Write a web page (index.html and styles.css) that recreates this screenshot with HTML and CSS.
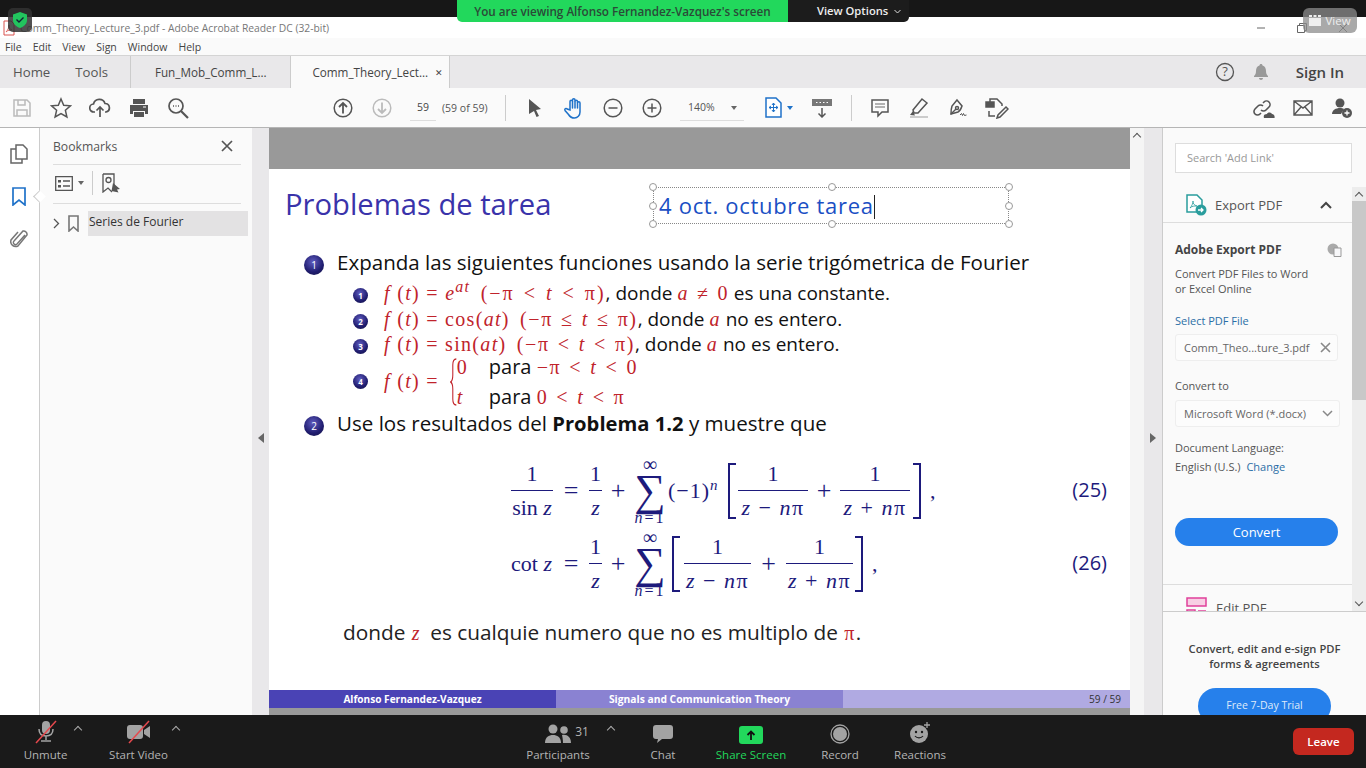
FILE: index.html
```html
<!DOCTYPE html>
<html lang="en">
<head>
    <meta charset="UTF-8">
    <title>Comm_Theory_Lecture_3.pdf - Adobe Acrobat Reader DC (32-bit)</title>
    <link rel="stylesheet" href="styles.css">
</head>
<body>
<div class="screen">
    <div class="topbar"></div>

    <div class="titlebar">
        <svg class="pdficon" width="12" height="16" viewBox="0 0 12 16"><path d="M1 1h7l3 3v11H1z" fill="#fff" stroke="#d9534f"/><path d="M3 12c2-2 3-5 3-7 0 3 1 4 3 5-2 0-4 0-6 2z" fill="none" stroke="#d9534f" stroke-width=".8"/></svg>
        <span class="apptitle">Comm_Theory_Lecture_3.pdf - Adobe Acrobat Reader DC (32-bit)</span>
        <div class="winctrls">
            <svg width="10" height="10" viewBox="0 0 10 10"><path d="M1 5h8" stroke="#666"/></svg>
            <svg width="10" height="10" viewBox="0 0 10 10"><path d="M.5 2.5h7v7h-7zM2.5 2.5v-2h7v7h-2" fill="none" stroke="#666"/></svg>
            <svg width="10" height="10" viewBox="0 0 10 10"><path d="M1 1l8 8M9 1l-8 8" stroke="#666"/></svg>
        </div>
    </div>

    <div class="menubar">
        <span>File</span><span>Edit</span><span>View</span><span>Sign</span><span>Window</span><span>Help</span>
    </div>

    <div class="tabbar">
        <span class="hometab">Home</span>
        <span class="hometab toolstab">Tools</span>
        <div class="doctab">Fun_Mob_Comm_L...</div>
        <div class="doctab active">Comm_Theory_Lect...<span class="tabclose">&#10005;</span></div>
        <div class="tabright">
            <svg width="20" height="20" viewBox="0 0 20 20"><circle cx="10" cy="10" r="8.5" fill="none" stroke="#555" stroke-width="1.3"/><text x="10" y="14" text-anchor="middle" class="helpmark">?</text></svg>
            <svg class="bell" width="16" height="18" viewBox="0 0 16 18"><path d="M8 1c1 0 1.500.7 1.500 1.500C12 3.300 13 5.500 13 8c0 3 1 4 2 5v1H1v-1c1-1 2-2 2-5 0-2.500 1-4.700 3.500-5.500C6.500 1.700 7 1 8 1zM6 15h4c0 1-1 2-2 2s-2-1-2-2z" fill="#999"/></svg>
            <span class="signin">Sign In</span>
        </div>
    </div>

    <div class="toolbar">
        <div class="tool"><svg width="20" height="20" viewBox="0 0 20 20" fill="none" stroke="#bbb" stroke-width="1.5"><path d="M2 2h13l3 3v13H2z"/><path d="M6 2v5h7V2M5 18v-6h10v6"/></svg></div>
        <div class="tool"><svg width="22" height="22" viewBox="0 0 22 22" fill="none" stroke="#555" stroke-width="1.500"><path d="M11 2l2.700 6.200 6.800.6-5.100 4.500 1.500 6.700L11 16.500 5.100 20l1.500-6.700L1.500 8.800l6.800-.6z"/></svg></div>
        <div class="tool"><svg width="22" height="22" viewBox="0 0 22 22" fill="none" stroke="#555" stroke-width="1.700"><path d="M6 15H5a4 4 0 0 1-.5-8A6 6 0 0 1 16 6.500a4.300 4.300 0 0 1 1 8.500h-1"/><path d="M11 20V10M7.500 13.500L11 10l3.500 3.500"/></svg></div>
        <div class="tool"><svg width="20" height="20" viewBox="0 0 20 20"><path d="M4 1h12v5H4zM1 7h18v9h-3v-3H4v3H1zM5 14h10v5H5z" fill="#555"/><path d="M14 9h3" stroke="#fff"/></svg></div>
        <div class="tool"><svg width="22" height="22" viewBox="0 0 22 22" fill="none" stroke="#555" stroke-width="1.700"><circle cx="9" cy="9" r="7"/><path d="M14 14l7 7" stroke-width="2.200"/><path d="M6 9h1M8.500 9h1M11 9h1" stroke-width="1.400"/></svg></div>

        <div class="tool navstart"><svg width="20" height="20" viewBox="0 0 20 20" fill="none" stroke="#555" stroke-width="1.500"><circle cx="10" cy="10" r="8.800"/><path d="M10 15.500V5M6 9l4-4 4 4" stroke-width="1.800"/></svg></div>
        <div class="tool"><svg width="20" height="20" viewBox="0 0 20 20" fill="none" stroke="#bbb" stroke-width="1.500"><circle cx="10" cy="10" r="8.800"/><path d="M10 4.500V15M6 11l4 4 4-4" stroke-width="1.800"/></svg></div>
        <div class="pagebox">59</div>
        <span class="pagecount">(59 of 59)</span>
        <div class="toolsep"></div>

        <div class="tool"><svg width="14" height="20" viewBox="0 0 14 20"><path d="M1 1l12 10-5 1 3 6-2.500 1-2.500-6L1 16z" fill="#555"/></svg></div>
        <div class="tool"><svg width="22" height="22" viewBox="0 0 22 22" fill="none" stroke="#1f72c9" stroke-width="1.500" stroke-linecap="round"><path d="M7 13V4.500a1.200 1.200 0 0 1 2.500 0V3a1.200 1.200 0 0 1 2.500 0v1.500a1.200 1.200 0 0 1 2.500 0V6a1.200 1.200 0 0 1 2.500 0v9c0 3.500-2.500 6-5.500 6s-4.500-1-6-3.500L2 13.500c-.8-1.500 1-2.800 2.200-1.500z"/><path d="M9.500 4.500V11M12 4.500V11M14.500 6v5"/></svg></div>
        <div class="tool"><svg width="20" height="20" viewBox="0 0 20 20" fill="none" stroke="#555" stroke-width="1.500"><circle cx="10" cy="10" r="8.800"/><path d="M5.500 10h9"/></svg></div>
        <div class="tool"><svg width="20" height="20" viewBox="0 0 20 20" fill="none" stroke="#555" stroke-width="1.500"><circle cx="10" cy="10" r="8.800"/><path d="M5.500 10h9M10 5.500v9"/></svg></div>
        <div class="zoomsel">140%<span class="caret"></span></div>
        <div class="fitpage">
            <svg width="17" height="21" viewBox="0 0 17 21"><path d="M1 1h10l5 5v14H1z" fill="#fff" stroke="#1f72c9" stroke-width="1.500"/><path d="M8.500 6v9M4 10.500h9M7 8l1.500-2L10 8M7 13l1.500 2 1.500-2M6 9l-2 1.500L6 12M11 9l2 1.500-2 1.500" fill="none" stroke="#1f72c9"/></svg>
            <span class="caret blue"></span>
        </div>
        <div class="tool"><svg width="22" height="20" viewBox="0 0 22 20"><path d="M1 1h20v7H1z" fill="#777"/><path d="M5 4.500h1.500M8.500 4.500H10M12 4.500h1.500M15.500 4.500H17" stroke="#fff"/><path d="M11 10v9M7.500 15.500L11 19l3.500-3.500" fill="none" stroke="#555" stroke-width="1.500"/></svg></div>
        <div class="toolsep narrow"></div>
        <div class="tool"><svg width="20" height="20" viewBox="0 0 20 20" fill="none" stroke="#555" stroke-width="1.500"><path d="M2 2h16v12h-6l-4 4v-4H2z"/><path d="M5 6h10M5 9h10" stroke="#999"/></svg></div>
        <div class="tool"><svg width="22" height="22" viewBox="0 0 22 22"><path d="M14 2l5 4-9 10H6l-1-3z" fill="none" stroke="#555" stroke-width="1.500"/><path d="M5 14l-3 4 5 .5z" fill="#555"/><path d="M2 20h18" stroke="#ccc" stroke-width="2"/></svg></div>
        <div class="tool"><svg width="22" height="22" viewBox="0 0 22 22" fill="none" stroke="#555" stroke-width="1.500"><path d="M10 3l5 6c-1 3-2 5-4 6l-7 2c0-3 0-5 1-8z"/><path d="M4 17l5-5"/><circle cx="10" cy="11" r="1.500"/><path d="M13 18l1.500-1.500 1 2 1-2 1 2 2-.5" stroke-width="1"/></svg></div>
        <div class="tool"><svg width="24" height="22" viewBox="0 0 24 22" fill="none" stroke="#555" stroke-width="1.500"><path d="M5 5V2h7l5 5v2M4 14v5h6"/><path d="M1 5h8v5H1z" fill="#555"/><path d="M21 10l2 2-8 8-3 1 1-3z"/></svg></div>

        <div class="toolright">
            <div class="tool"><svg width="24" height="22" viewBox="0 0 24 22" fill="none" stroke="#555" stroke-width="1.600"><path d="M9 13a3.500 3.500 0 0 0 5 0l3-3a3.500 3.500 0 0 0-5-5l-1 1"/><path d="M11 9a3.500 3.500 0 0 0-5 0l-3 3a3.500 3.500 0 0 0 5 5l1-1"/><path d="M12 21c-1-3 1-4 3-4 .5-2 4-2 5 0 2 0 3 2 2.500 4z" fill="#555" stroke="none"/></svg></div>
            <div class="tool"><svg width="20" height="16" viewBox="0 0 20 16" fill="none" stroke="#555" stroke-width="1.400"><path d="M1 1h18v14H1zM1 1l9 7 9-7M1 15l7-8M19 15l-7-8"/></svg></div>
            <div class="tool"><svg width="22" height="22" viewBox="0 0 22 22"><circle cx="9" cy="6" r="4.500" fill="#555"/><path d="M1 17c0-4 4-6 8-6 1.500 0 3 .3 4 1l-3 5z" fill="#555"/><circle cx="16" cy="16" r="5" fill="#555"/><path d="M16 13.500v5M13.500 16h5" stroke="#fff" stroke-width="1.300"/></svg></div>
        </div>
    </div>

    <div class="workspace">
        <div class="rail">
            <svg width="18" height="20" viewBox="0 0 18 20" fill="none" stroke="#666" stroke-width="1.500"><path d="M6 1h7l4 4v10H6z"/><path d="M6 5H1v14h11v-4"/></svg>
            <svg width="14" height="19" viewBox="0 0 14 19" fill="none" stroke="#1f72c9" stroke-width="1.700"><path d="M1 1h12v17l-6-5-6 5z"/></svg>
            <svg width="18" height="20" viewBox="0 0 18 20" fill="none" stroke="#777" stroke-width="1.500"><path d="M15 6l-8 9a2 2 0 0 1-3-3l9-10a3.500 3.500 0 0 1 4 4l-9 11a5 5 0 0 1-7-6l7-8"/></svg>
            <span class="railnotch"></span>
        </div>

        <div class="bookmarks">
            <div class="bmhead"><span>Bookmarks</span>
                <svg width="12" height="12" viewBox="0 0 12 12"><path d="M1 1l10 10M11 1L1 11" stroke="#555" stroke-width="1.700"/></svg>
            </div>
            <div class="bmtools">
                <svg width="18" height="15" viewBox="0 0 18 15" fill="none" stroke="#555" stroke-width="1.300"><path d="M.7.7h16.600v13.600H.7z"/><path d="M3 4h3v2.500H3zM3 9h3v2.500H3z" fill="#555" stroke="none"/><path d="M8 5h7M8 10h7"/></svg>
                <span class="caret small"></span>
                <span class="bmsep"></span>
                <svg width="19" height="20" viewBox="0 0 19 20" fill="none" stroke="#555" stroke-width="1.300"><path d="M1 1h11v12M1 1v18l5-4 4 4"/><circle cx="6.500" cy="7" r="2.500"/><path d="M11 10l7 6-3 .5 1.500 3-7-1.500z" fill="#555" stroke="none"/></svg>
            </div>
            <div class="bmrow">
                <svg width="7" height="11" viewBox="0 0 7 11"><path d="M1 1l4.500 4.500L1 10" fill="none" stroke="#555" stroke-width="1.300"/></svg>
                <svg class="bmflag" width="11" height="17" viewBox="0 0 11 17"><path d="M1 1h9v15l-4.500-4L1 16z" fill="none" stroke="#777" stroke-width="1.600"/></svg>
                <span class="bmlabel">Series de Fourier</span>
            </div>
        </div>

        <div class="gutter"><span class="arrow left"></span></div>

        <div class="slide">
            <div class="slidetop"></div>
            <div class="slidebody">
                <div class="titlerow">
                    <h1>Problemas de tarea</h1>
                    <div class="textbox">
                        <i class="hd tl"></i><i class="hd ml"></i><i class="hd bl"></i>
                        <i class="hd tc"></i><i class="hd bc"></i>
                        <i class="hd tr"></i><i class="hd mr"></i><i class="hd br"></i>
                        4 oct. octubre tarea<span class="cursor"></span>
                    </div>
                </div>

                <div class="mainitem first"><span class="ball">1</span>Expanda las siguientes funciones usando la serie trigómetrica de Fourier</div>
                <div class="subitem first"><span class="ball mini">1</span><span class="m"><i>f</i> (<i>t</i>) = <i>e</i><sup><i>at</i></sup> <span class="rng">(−π &lt; <i>t</i> &lt; π)</span></span>, donde <span class="m neq"><i>a</i> ≠ 0</span> es una constante.</div>
                <div class="subitem"><span class="ball mini">2</span><span class="m"><i>f</i> (<i>t</i>) = cos(<i>at</i>) <span class="rng tight">(−π ≤ <i>t</i> ≤ π)</span></span>, donde <span class="m"><i>a</i></span> no es entero.</div>
                <div class="subitem"><span class="ball mini">3</span><span class="m"><i>f</i> (<i>t</i>) = sin(<i>at</i>) <span class="rng tight">(−π &lt; <i>t</i> &lt; π)</span></span>, donde <span class="m"><i>a</i></span> no es entero.</div>
                <div class="subitem piece">
                    <span class="ball mini">4</span><span class="m"><i>f</i> (<i>t</i>) =</span>
                    <svg class="brace" width="7" height="48" viewBox="0 0 10 48" preserveAspectRatio="none"><path d="M9 1C5 1 4 3 4 7v10c0 4-1 6-3 7 2 1 3 3 3 7v10c0 4 1 6 5 6" fill="none" stroke="#c0232b" stroke-width="1.500"/></svg>
                    <div class="cases">
                        <div><span class="m case1">0</span>para <span class="m rng tight">−π &lt; <i>t</i> &lt; 0</span></div>
                        <div><span class="m case1"><i>t</i></span>para <span class="m rng tight">0 &lt; <i>t</i> &lt; π</span></div>
                    </div>
                </div>
                <div class="mainitem second"><span class="ball">2</span>Use los resultados del <b>Problema 1.2</b> y muestre que</div>

                <div class="eq eq1">
                    <span class="frac w42"><span>1</span><span>sin <i>z</i></span></span>
                    <span class="op">=</span>
                    <span class="frac w13"><span>1</span><span><i>z</i></span></span>
                    <span class="op">+</span>
                    <span class="sum"><span class="lim">∞</span><span class="sigma">∑</span><span class="lim"><i>n</i>=1</span></span>
                    <span class="pow">(−1)<sup><i>n</i></sup></span>
                    <span class="brk">
                        <span class="frac w70"><span>1</span><span><i>z</i> − <i>n</i>π</span></span>
                        <span class="op">+</span>
                        <span class="frac w70"><span>1</span><span><i>z</i> + <i>n</i>π</span></span>
                    </span>
                    <span class="comma">,</span>
                    <span class="eqnum">(25)</span>
                </div>
                <div class="eq eq2">
                    <span class="cot">cot <i>z</i></span>
                    <span class="op">=</span>
                    <span class="frac w13"><span>1</span><span><i>z</i></span></span>
                    <span class="op">+</span>
                    <span class="sum"><span class="lim">∞</span><span class="sigma">∑</span><span class="lim"><i>n</i>=1</span></span>
                    <span class="brk nopow">
                        <span class="frac w70"><span>1</span><span><i>z</i> − <i>n</i>π</span></span>
                        <span class="op">+</span>
                        <span class="frac w70"><span>1</span><span><i>z</i> + <i>n</i>π</span></span>
                    </span>
                    <span class="comma">,</span>
                    <span class="eqnum">(26)</span>
                </div>
                <div class="closing">donde <span class="m zvar"><i>z</i></span> es cualquie numero que no es multiplo de <span class="m pivar">π</span>.</div>
            </div>
            <div class="slidefoot">
                <span class="seg one">Alfonso Fernandez-Vazquez</span>
                <span class="seg two">Signals and Communication Theory</span>
                <span class="seg three">59 / 59</span>
            </div>
            <div class="slidebottom"></div>
        </div>

        <div class="docscroll"><span class="arrow up"></span></div>
        <div class="gutter right"><span class="arrow rightward"></span></div>

        <div class="panel">
            <div class="searchwrap"><div class="search">Search 'Add Link'</div></div>
            <div class="panelscroll">
                <div class="panelcontent">
                    <div class="exporthead">
                        <svg width="21" height="22" viewBox="0 0 21 22"><path d="M1 1h10l5 5v12H1z" fill="#fff" stroke="#2a9d9d" stroke-width="1.500"/><path d="M4 14c2-2 3-5 3-7 0 3 1 4 4 5-3 0-5 0-7 2z" fill="none" stroke="#2a9d9d" stroke-width=".8"/><circle cx="15" cy="16" r="5.500" fill="#2a9d9d"/><path d="M12 16h5M15 14l2 2-2 2" fill="none" stroke="#fff" stroke-width="1.300"/></svg>
                        <span>Export PDF</span>
                        <svg class="chev" width="12" height="8" viewBox="0 0 12 8"><path d="M1 7l5-5 5 5" fill="none" stroke="#444" stroke-width="2"/></svg>
                    </div>
                    <div class="exportbody">
                        <div class="exporttitle"><b>Adobe Export PDF</b>
                            <svg width="15" height="14" viewBox="0 0 15 14"><circle cx="6" cy="6" r="5.500" fill="#aaa"/><path d="M7 5h7v8.500H7z" fill="#f7f7f9" stroke="#999"/></svg>
                        </div>
                        <p class="desc">Convert PDF Files to Word<br>or Excel Online</p>
                        <div class="bluelink selectfile">Select PDF File</div>
                        <div class="field filefield"><span>Comm_Theo...ture_3.pdf</span>
                            <svg width="11" height="11" viewBox="0 0 11 11"><path d="M1 1l9 9M10 1l-9 9" stroke="#888" stroke-width="1.600"/></svg>
                        </div>
                        <div class="convertlabel">Convert to</div>
                        <div class="field wordfield"><span>Microsoft Word (*.docx)</span>
                            <svg width="11" height="7" viewBox="0 0 11 7"><path d="M1 1l4.500 4.500L10 1" fill="none" stroke="#888" stroke-width="1.500"/></svg>
                        </div>
                        <div class="langlabel">Document Language:</div>
                        <div class="langvalue">English (U.S.) <span class="bluelink">Change</span></div>
                        <div class="convertbtn">Convert</div>
                    </div>
                    <div class="editpdf">
                        <svg width="21" height="22" viewBox="0 0 21 22" fill="none" stroke="#e0409a" stroke-width="1.500"><path d="M1 1h19v8H1z" fill="#f8cfe4"/><path d="M1 13h8v8H1zM12 14h8M12 18h8"/></svg>
                        <span>Edit PDF</span>
                    </div>
                </div>
                <div class="panelbar">
                    <span class="arrow up dark"></span>
                    <span class="thumb"></span>
                    <span class="arrow down dark"></span>
                </div>
            </div>
            <div class="promo">
                <p>Convert, edit and e-sign PDF<br>forms &amp; agreements</p>
                <div class="trialbtn">Free 7-Day Trial</div>
            </div>
        </div>
    </div>

    <div class="zoombar">
        <div class="zitem unmute">
            <svg width="26" height="24" viewBox="0 0 26 24"><rect x="9" y="1" width="8" height="13" rx="4" fill="#a3a3a3"/><path d="M6 9c0 5 3 7 7 7s7-2 7-7M13 16v4M8 21h10" fill="none" stroke="#a3a3a3" stroke-width="1.500"/><path d="M3 23L23 1" stroke="#e5484d" stroke-width="1.500"/></svg>
            <span>Unmute</span>
        </div>
        <span class="zchev"></span>
        <div class="zitem video">
            <svg width="26" height="24" viewBox="0 0 26 24"><rect x="1" y="5" width="16" height="14" rx="3" fill="#a3a3a3"/><path d="M18 10l6-4v12l-6-4z" fill="#a3a3a3"/><path d="M3 23L23 1" stroke="#e5484d" stroke-width="1.500"/></svg>
            <span>Start Video</span>
        </div>
        <span class="zchev"></span>
        <div class="zitem people">
            <div class="peopleicon">
                <svg width="26" height="20" viewBox="0 0 26 20" fill="#a3a3a3"><circle cx="8" cy="5" r="4.500"/><path d="M0 19c0-6 4-8 8-8s8 2 8 8z"/><circle cx="19" cy="6" r="3.800"/><path d="M17 11c5-1 9 2 9 8h-8c0-3-.5-6-1-8z"/></svg>
                <span class="pcount">31</span>
            </div>
            <span>Participants</span>
        </div>
        <span class="zchev"></span>
        <div class="zitem chat">
            <svg width="22" height="20" viewBox="0 0 22 20"><path d="M4 1h14a3 3 0 0 1 3 3v8a3 3 0 0 1-3 3h-8l-5 4 1-4H4a3 3 0 0 1-3-3V4a3 3 0 0 1 3-3z" fill="#a3a3a3"/></svg>
            <span>Chat</span>
        </div>
        <div class="zitem share">
            <svg width="24" height="18" viewBox="0 0 24 18"><rect width="24" height="18" rx="3" fill="#22d85c"/><path d="M12 14V6M8.500 9L12 5.500 15.500 9" fill="none" stroke="#111" stroke-width="1.800"/></svg>
            <span>Share Screen</span>
        </div>
        <div class="zitem record">
            <svg width="20" height="20" viewBox="0 0 20 20"><circle cx="10" cy="10" r="9" fill="none" stroke="#a3a3a3" stroke-width="1.300"/><circle cx="10" cy="10" r="7" fill="#a3a3a3"/></svg>
            <span>Record</span>
        </div>
        <div class="zitem reactions">
            <svg width="22" height="22" viewBox="0 0 22 22"><circle cx="10" cy="12" r="9" fill="#a3a3a3"/><circle cx="7" cy="10" r="1.200" fill="#1a1a1a"/><circle cx="13" cy="10" r="1.200" fill="#1a1a1a"/><path d="M6 14c2 2.500 6 2.500 8 0" fill="none" stroke="#1a1a1a" stroke-width="1.200"/><path d="M18 0v6M15 3h6" stroke="#a3a3a3" stroke-width="1.300"/></svg>
            <span>Reactions</span>
        </div>
        <div class="leavebtn">Leave</div>
    </div>

    <!-- zoom controls floating over the shared screen -->
    <div class="banner">
        <div class="bannergreen">You are viewing Alfonso Fernandez-Vazquez's screen</div>
        <div class="bannerdark">View Options
            <svg width="7" height="5" viewBox="0 0 7 5"><path d="M.5 1l3 3 3-3" fill="none" stroke="#ddd"/></svg>
        </div>
    </div>
    <div class="shield">
        <svg width="14" height="16" viewBox="0 0 14 16"><path d="M7 0l7 2.500V8c0 4-3 6.500-7 8-4-1.500-7-4-7-8V2.500z" fill="#22c55e"/><path d="M3.500 7.500l2.500 2.500 4.500-4.500" fill="none" stroke="#123" stroke-width="1.400"/></svg>
    </div>
    <div class="viewbtn">
        <svg width="12" height="11" viewBox="0 0 12 11" fill="#eee"><path d="M0 3h12v8H0zM0 0h3v2H0zM4.500 0h3v2h-3zM9 0h3v2H9z"/></svg>
        View
    </div>
</div>
</body>
</html>
```

FILE: styles.css
```css
* {
    margin: 0;
    padding: 0;
    box-sizing: border-box;
}

body {
    background: #1a1a1a;
    font-family: "Open Sans", "Noto Sans", sans-serif;
    overflow: hidden;
}

.screen {
    position: relative;
    width: 1366px;
    height: 768px;
    overflow: hidden;
    display: flex;
    flex-direction: column;
}

.topbar {
    height: 17px;
    background: #171717;
}

/* window chrome */
.titlebar {
    height: 21px;
    background: #fff;
    display: flex;
    align-items: center;
    padding-left: 3px;
}

.apptitle {
    font-size: 10.3px;
    color: #777;
    margin-left: 5px;
}

.winctrls {
    margin-left: auto;
    display: flex;
    gap: 31px;
    padding-right: 18px;
}

.menubar {
    height: 17px;
    background: #fafafa;
    display: flex;
    align-items: center;
    gap: 11px;
    padding-left: 5px;
    font-size: 10.5px;
    color: #444;
}

.tabbar {
    height: 33px;
    background: #e9e8ea;
    border-top: 1px solid #d4d4d4;
    display: flex;
    align-items: center;
    font-size: 13.2px;
    color: #555;
}

.hometab {
    padding-left: 13px;
}

.toolstab {
    padding-left: 25px;
    width: 56px;
}

.doctab {
    width: 160px;
    height: 100%;
    display: flex;
    align-items: center;
    justify-content: center;
    font-size: 11.7px;
    color: #444;
    border-left: 1px solid #ccc;
    position: relative;
}

.hometab + .toolstab + .doctab {
    margin-left: 24px;
}

.doctab.active {
    background: #fafafa;
    border-right: 1px solid #ccc;
}

.tabclose {
    position: absolute;
    right: 6px;
    font-size: 9px;
}

.tabright {
    margin-left: auto;
    display: flex;
    align-items: center;
    padding-right: 22px;
}

.helpmark {
    font-size: 13px;
    fill: #555;
    font-family: "Open Sans", sans-serif;
}

.bell {
    margin-left: 18px;
}

.signin {
    margin-left: 27px;
    font-size: 15px;
    font-weight: 600;
    color: #444;
}

.toolbar {
    height: 40px;
    background: #fafafa;
    border-bottom: 1px solid #b5b5b5;
    display: flex;
    align-items: center;
    padding-left: 2px;
}

.tool {
    width: 39px;
    height: 100%;
    display: flex;
    align-items: center;
    justify-content: center;
    flex: none;
}

.navstart {
    margin-left: 126px;
}

.pagebox {
    width: 26px;
    margin-left: 9px;
    height: 26px;
    line-height: 24px;
    text-align: center;
    font-size: 10.5px;
    color: #444;
    border-bottom: 1px solid #ddd;
}

.pagecount {
    margin-left: 6px;
    width: 48px;
    font-size: 10.5px;
    color: #555;
}

.toolsep {
    width: 1px;
    height: 26px;
    background: #ccc;
    margin: 0 9px 0 15px;
    flex: none;
}

.toolsep.narrow {
    margin: 0 8px 0 10px;
}

.zoomsel {
    width: 64px;
    height: 26px;
    line-height: 24px;
    margin-left: 9px;
    padding-left: 8px;
    font-size: 10.5px;
    color: #555;
    border-bottom: 1px solid #ddd;
    position: relative;
}

.caret {
    display: inline-block;
    border-left: 3px solid transparent;
    border-right: 3px solid transparent;
    border-top: 4px solid #666;
}

.zoomsel .caret {
    position: absolute;
    right: 7px;
    top: 11px;
}

.caret.blue {
    border-top-color: #1f72c9;
    margin-left: 5px;
}

.fitpage {
    margin-left: 21px;
    width: 37px;
    display: flex;
    align-items: center;
    flex: none;
}

.toolright {
    margin-left: auto;
    display: flex;
    height: 100%;
    padding-right: 5px;
}

/* main area */
.workspace {
    flex: 1;
    display: flex;
    min-height: 0;
    background: #fff;
}

.rail {
    position: relative;
    width: 40px;
    border-right: 1px solid #ccc;
    background: #fff;
    display: flex;
    flex-direction: column;
    align-items: center;
    gap: 23px;
    padding: 16px 2px 0 0;
}

.railnotch {
    position: absolute;
    right: -5px;
    top: 64px;
    width: 9px;
    height: 9px;
    background: #fff;
    border-left: 1px solid #ccc;
    border-bottom: 1px solid #ccc;
    transform: rotate(45deg);
}

.bookmarks {
    width: 212px;
    background: #fafafa;
    padding: 0 4px 0 13px;
}

.bmhead {
    height: 37px;
    width: 188px;
    border-bottom: 1px solid #ddd;
    display: flex;
    align-items: center;
    justify-content: space-between;
    padding-right: 8px;
    font-size: 12.2px;
    color: #555;
}

.bmtools {
    height: 39px;
    width: 188px;
    border-bottom: 1px solid #ddd;
    display: flex;
    align-items: center;
    padding: 0 0 2px 2px;
}

.caret.small {
    margin-left: 5px;
}

.bmsep {
    width: 1px;
    height: 24px;
    background: #ccc;
    margin: 0 9px 0 8px;
}

.bmrow {
    margin-top: 7px;
    height: 25px;
    display: flex;
    align-items: center;
}

.bmflag {
    margin-left: 8px;
}

.bmlabel {
    margin-left: 9px;
    flex: 1;
    height: 100%;
    line-height: 22px;
    background: #e3e2e3;
    font-size: 12px;
    color: #333;
    padding-left: 1px;
}

.gutter {
    width: 17px;
    background: #e9e8ea;
    position: relative;
}

.gutter.right {
    width: 18px;
}

.arrow {
    position: absolute;
    width: 0;
    height: 0;
}

.arrow.left {
    left: 6px;
    top: 305px;
    border-top: 5px solid transparent;
    border-bottom: 5px solid transparent;
    border-right: 6px solid #666;
}

.arrow.rightward {
    left: 6px;
    top: 305px;
    border-top: 5px solid transparent;
    border-bottom: 5px solid transparent;
    border-left: 6px solid #666;
}

.arrow.up,
.arrow.down {
    width: 6px;
    height: 6px;
    border-left: 1.5px solid #555;
    border-top: 1.5px solid #555;
}

.arrow.up {
    transform: rotate(45deg);
}

.arrow.down {
    transform: rotate(225deg);
}

.docscroll {
    width: 14px;
    background: #f5f5f5;
    position: relative;
}

.docscroll .arrow.up {
    left: 4px;
    top: 6px;
}

/* the slide */
.slide {
    width: 861px;
    display: flex;
    flex-direction: column;
    background: #fff;
}

.slidetop {
    height: 41px;
    background: #999;
    flex: none;
}

.slidebody {
    flex: 1;
    min-height: 0;
}

.titlerow {
    margin-top: 18px;
    height: 37px;
    display: flex;
    align-items: center;
    padding-left: 16px;
}

h1 {
    font-size: 29.2px;
    font-weight: 400;
    color: #3a33aa;
    width: 368px;
    white-space: nowrap;
    margin-top: -4px;
}

.textbox {
    position: relative;
    width: 356px;
    height: 37px;
    border: 1px dotted #888;
    line-height: 35px;
    padding-left: 5px;
    font-size: 22px;
    letter-spacing: .7px;
    color: #1a4fc4;
    white-space: nowrap;
}

.cursor {
    display: inline-block;
    width: 1px;
    height: 24px;
    background: #222;
    vertical-align: -5px;
}

.hd {
    position: absolute;
    width: 8px;
    height: 8px;
    border: 1px solid #999;
    border-radius: 50%;
    background: #fff;
}

.tl { left: -5px; top: -5px; }
.ml { left: -5px; top: 14px; }
.bl { left: -5px; bottom: -5px; }
.tc { left: 174px; top: -5px; }
.bc { left: 174px; bottom: -5px; }
.tr { right: -5px; top: -5px; }
.mr { right: -5px; top: 14px; }
.br { right: -5px; bottom: -5px; }

.mainitem {
    display: block;
    height: 26px;
    line-height: 26px;
    padding-left: 35px;
    font-size: 20.55px;
    color: #111;
    white-space: nowrap;
}

.mainitem b {
    font-size: 20.2px;
}

.mainitem.first {
    margin-top: 25px;
}

.mainitem.second {
    margin-top: 4px;
}

.ball {
    display: inline-block;
    width: 20px;
    height: 20px;
    line-height: 20px;
    margin-right: 13px;
    border-radius: 50%;
    background: radial-gradient(circle at 45% 35%, #5f5cc0, #1f1c6e 60%, #14123f);
    color: #fff;
    font-size: 10px;
    text-align: center;
    vertical-align: 1px;
}

.ball.mini {
    width: 15px;
    height: 15px;
    line-height: 15px;
    font-size: 8px;
    font-weight: 700;
    margin-right: 16px;
    vertical-align: 1px;
}

.subitem {
    display: block;
    height: 25.500px;
    line-height: 25.500px;
    padding-left: 84px;
    font-size: 19px;
    color: #111;
    white-space: nowrap;
}

.subitem.first {
    margin-top: 6px;
}

.subitem.piece {
    display: flex;
    align-items: center;
    height: 48px;
    line-height: normal;
}

.m {
    font-family: "Liberation Serif", serif;
    font-size: 20px;
    color: #c0232b;
    letter-spacing: 1.3px;
}

.m sup {
    font-size: 16px;
    line-height: 0;
}

.rng {
    letter-spacing: 2px;
    word-spacing: 2px;
}

.rng.tight {
    letter-spacing: 1.6px;
    word-spacing: 1.5px;
}

.neq {
    letter-spacing: 1.5px;
    word-spacing: 1.5px;
}

.subitem .m .rng {
    margin-left: 4px;
}

.brace {
    margin-left: 11px;
    flex: none;
}

.cases {
    font-size: 20px;
}

.cases div {
    height: 30px;
    line-height: 30px;
}

.case1 {
    display: inline-block;
    width: 32px;
}

/* equations */
.eq {
    display: flex;
    align-items: center;
    height: 72px;
    padding-left: 242px;
    font-family: "Liberation Serif", serif;
    font-size: 22px;
    color: #1d1a7c;
    white-space: nowrap;
}

.eq1 {
    margin-top: 19px;
}

.eq2 {
    margin-top: 1px;
}

.frac {
    display: inline-flex;
    flex-direction: column;
    align-items: center;
    flex: none;
}

.frac span {
    display: block;
    width: 100%;
    text-align: center;
    line-height: 33px;
}

.frac span + span {
    border-top: 1.500px solid #1d1a7c;
}

.w42 { width: 42px; }
.w13 { width: 13px; }
.w70 { width: 70px; }

.w70 span + span {
    letter-spacing: 1.500px;
}

.op {
    width: 36px;
    text-align: center;
    font-size: 26px;
    line-height: 26px;
    flex: none;
}

.eq > .op + .frac + .op {
    width: 32px;
}

.brk .op {
    width: 32px;
}

.sum {
    display: flex;
    flex-direction: column;
    align-items: center;
    width: 32px;
    flex: none;
}

.lim {
    font-size: 16px;
    line-height: 16px;
    letter-spacing: 2px;
}

.lim:first-child {
    font-size: 20px;
    letter-spacing: 0;
}

.sigma {
    font-size: 44px;
    line-height: 38px;
}

.pow {
    margin-left: 2px;
    width: 54px;
    letter-spacing: 1px;
    flex: none;
}

.pow sup {
    font-size: 15px;
    line-height: 0;
}

.brk {
    display: flex;
    align-items: center;
    margin-left: 6px;
    height: 56px;
    padding: 0 11px 0 10px;
    background:
        linear-gradient(#1d1a7c, #1d1a7c) left top / 2px 100% no-repeat,
        linear-gradient(#1d1a7c, #1d1a7c) left top / 8px 2px no-repeat,
        linear-gradient(#1d1a7c, #1d1a7c) left bottom / 8px 2px no-repeat,
        linear-gradient(#1d1a7c, #1d1a7c) right top / 2px 100% no-repeat,
        linear-gradient(#1d1a7c, #1d1a7c) right top / 8px 2px no-repeat,
        linear-gradient(#1d1a7c, #1d1a7c) right bottom / 8px 2px no-repeat;
}

.brk.nopow {
    margin-left: 6px;
    padding: 0 10px 0 12px;
}

.nopow .w70 {
    width: 67px;
}

.nopow .op {
    width: 35px;
}

.comma {
    margin-left: 9px;
}

.cot {
    width: 42px;
    flex: none;
}

.eqnum {
    margin-left: auto;
    padding-right: 23px;
    font-family: "Open Sans", sans-serif;
    font-size: 20px;
    margin-top: -3px;
}

.closing {
    margin-top: 19px;
    padding-left: 74px;
    height: 26px;
    line-height: 26px;
    font-size: 20.8px;
    color: #222;
}

.zvar {
    margin: 0 4px 0 1px;
}

.pivar {
    margin-left: 1px;
}

.slidefoot {
    height: 18px;
    display: flex;
    flex: none;
    font-size: 10.1px;
    font-weight: 700;
    line-height: 18px;
    color: #fff;
}

.seg {
    width: 287px;
    text-align: center;
}

.seg.one { background: #4a43b5; }
.seg.two { background: #8a82d2; font-size: 10.3px; }

.seg.three {
    background: #b0aae2;
    text-align: right;
    padding-right: 9px;
    color: #333;
    font-weight: 400;
}

.slidebottom {
    height: 7px;
    background: #999;
    flex: none;
}

/* right panel */
.panel {
    flex: 1;
    background: #fafafa;
    border-left: 1px solid #ccc;
    display: flex;
    flex-direction: column;
    min-width: 0;
}

.searchwrap {
    height: 59px;
    padding: 15px 14px 0 12px;
    flex: none;
}

.search {
    height: 30px;
    background: #fff;
    border: 1px solid #ddd;
    line-height: 28px;
    padding-left: 11px;
    font-size: 11px;
    color: #999;
}

.panelscroll {
    height: 424px;
    flex: none;
    display: flex;
    overflow: hidden;
}

.panelcontent {
    width: 189px;
    flex: none;
}

.exporthead {
    height: 36px;
    border-bottom: 1px solid #ddd;
    display: flex;
    align-items: center;
    padding-left: 23px;
    font-size: 13px;
    color: #555;
}

.exporthead span {
    margin-left: 8px;
}

.chev {
    margin-left: auto;
    margin-right: 20px;
}

.exportbody {
    height: 362px;
    border-bottom: 1px solid #ddd;
    padding: 19px 10px 0 12px;
    font-size: 11px;
    color: #555;
}

.exporttitle {
    display: flex;
    justify-content: space-between;
    align-items: center;
    height: 15px;
    font-size: 12px;
    color: #444;
}

.desc {
    margin-top: 9px;
    line-height: 15px;
}

.bluelink {
    color: #2a6ea6;
}

.selectfile {
    margin-top: 17px;
    line-height: 15px;
}

.field {
    display: flex;
    align-items: center;
    justify-content: space-between;
    height: 27px;
    margin-top: 6px;
    padding: 0 6px 0 8px;
    background: #fcfcfc;
    border: 1px solid #eee;
    border-radius: 3px;
    color: #666;
}

.filefield {
    width: 163px;
}

.wordfield {
    width: 165px;
    margin-top: 7px;
}

.convertlabel {
    margin-top: 17px;
    line-height: 15px;
}

.langlabel {
    margin-top: 13px;
    line-height: 15px;
}

.langvalue {
    margin-top: 4px;
    line-height: 15px;
}

.langvalue .bluelink {
    margin-left: 3px;
}

.convertbtn {
    margin-top: 44px;
    width: 163px;
    height: 28px;
    line-height: 28px;
    border-radius: 14px;
    background: #2680eb;
    color: #fff;
    font-size: 13px;
    text-align: center;
}

.editpdf {
    display: flex;
    align-items: center;
    padding: 12px 0 0 23px;
    font-size: 13px;
    color: #555;
}

.editpdf span {
    margin-left: 9px;
}

.panelbar {
    position: relative;
    flex: 1;
    background: #ededed;
}

.panelbar .arrow.up {
    left: 4px;
    top: 6px;
}

.panelbar .arrow.down {
    left: 4px;
    bottom: 6px;
}

.thumb {
    position: absolute;
    left: 0;
    right: 0;
    top: 14px;
    height: 199px;
    background: #c8c8c8;
}

.promo {
    flex: 1;
    min-height: 0;
    overflow: hidden;
    border-top: 1px solid #ccc;
    text-align: center;
    padding-top: 29px;
}

.promo p {
    font-size: 11.2px;
    font-weight: 600;
    line-height: 15px;
    color: #444;
}

.trialbtn {
    width: 133px;
    height: 36px;
    margin: 17px auto 0;
    line-height: 34px;
    border-radius: 18px;
    background: #2680eb;
    color: #dfeafa;
    font-size: 10.5px;
}

/* zoom bar */
.zoombar {
    height: 53px;
    flex: none;
    background: #1a1a1a;
    display: flex;
    align-items: flex-start;
    font-size: 11.5px;
    color: #b4b4b4;
}

.zitem {
    display: flex;
    flex-direction: column;
    align-items: center;
    flex: none;
    height: 53px;
    justify-content: flex-end;
    padding-bottom: 6px;
    white-space: nowrap;
}

.zitem svg {
    margin-bottom: 3px;
}

.zchev {
    width: 6px;
    height: 6px;
    margin: 12px 2px 0;
    border-left: 1.500px solid #aaa;
    border-top: 1.500px solid #aaa;
    transform: rotate(45deg);
    flex: none;
}

.unmute { width: 43px; margin-left: 24px; }
.video { width: 59px; margin-left: 26px; }
.unmute + .zchev { margin-left: 8px; }
.video + .zchev { margin-left: 5px; }
.people { width: 62px; margin-left: 346px; }
.people + .zchev { margin-left: 19px; }
.chat { width: 26px; margin-left: 34px; }
.share { width: 70px; margin-left: 40px; color: #22d85c; }
.record { width: 38px; margin-left: 35px; }
.reactions { width: 52px; margin-left: 35px; }

.peopleicon {
    display: flex;
    align-items: center;
    gap: 4px;
    padding-left: 18px;
}

.peopleicon svg {
    margin-bottom: 3px;
}

.pcount {
    font-size: 12px;
    margin-bottom: 7px;
}

.leavebtn {
    margin: 13px 12px 0 auto;
    width: 61px;
    height: 27px;
    line-height: 27px;
    border-radius: 6px;
    background: #c4281f;
    color: #fff;
    font-size: 11.5px;
    font-weight: 600;
    text-align: center;
}

/* overlays */
.banner {
    position: absolute;
    left: 457px;
    top: 0;
    height: 22px;
    display: flex;
    border-radius: 0 0 5px 5px;
    overflow: hidden;
    font-size: 11.7px;
    line-height: 22px;
    font-weight: 600;
}

.bannergreen {
    width: 331px;
    background: #22d85c;
    color: #2b4a38;
    text-align: center;
}

.bannerdark {
    width: 121px;
    padding-left: 29px;
    background: #1c1c1c;
    color: #eee;
    font-size: 11.2px;
}

.bannerdark svg {
    margin-left: 3px;
    vertical-align: 1px;
}

.shield {
    position: absolute;
    left: 8px;
    top: 8px;
    width: 24px;
    height: 24px;
    border-radius: 5px;
    background: rgba(50, 50, 50, .85);
    display: flex;
    align-items: center;
    justify-content: center;
}

.viewbtn {
    position: absolute;
    left: 1303px;
    top: 8px;
    width: 54px;
    height: 25px;
    border-radius: 6px;
    background: rgba(140, 140, 140, .75);
    color: #eee;
    font-size: 11.5px;
    display: flex;
    align-items: center;
    justify-content: center;
    gap: 4px;
}
```
